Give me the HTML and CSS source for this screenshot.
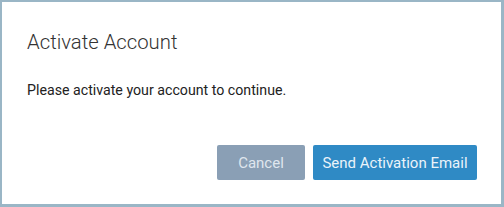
FILE: index.html
```html
<!DOCTYPE html>
<html>
<head>
<meta charset="utf-8">
<link rel="stylesheet" href="styles.css">
</head>
<body>
<div class="modal">
  <h1 class="title">Activate Account</h1>
  <p class="message">Please activate your account to continue.</p>
  <div class="footer">
    <button class="btn btn-cancel">Cancel</button>
    <button class="btn btn-primary">Send Activation Email</button>
  </div>
</div>
</body>
</html>
```
FILE: styles.css
```css
html, body {
  margin: 0;
  padding: 0;
  background: #ffffff;
}
.modal {
  box-sizing: border-box;
  width: 504px;
  height: 207px;
  border-style: solid;
  border-color: #9ab6c6;
  border-width: 2px 3px 3px 2px;
  background: #ffffff;
  padding: 26px 24px 0 25px;
  font-family: Roboto, "Liberation Sans", sans-serif;
  display: flex;
  flex-direction: column;
}
.title {
  margin: 0;
  font-size: 20.3px;
  line-height: 28px;
  font-weight: 300;
  color: #333333;
}
.message {
  margin: 24px 0 0 0;
  font-size: 14.2px;
  line-height: 20px;
  color: #222222;
}
.footer {
  margin-top: 45px;
  display: flex;
  justify-content: flex-end;
  gap: 8px;
}
.btn {
  height: 35px;
  border: none;
  border-radius: 2px;
  font-family: Roboto, "Liberation Sans", sans-serif;
  font-size: 15px;
  padding: 0;
  cursor: pointer;
}
.btn-cancel {
  width: 88px;
  background: #8a9fb5;
  color: #dfe6ee;
}
.btn-primary {
  width: 164px;
  background: #2f8ac5;
  color: #eaf3fa;
}
```
